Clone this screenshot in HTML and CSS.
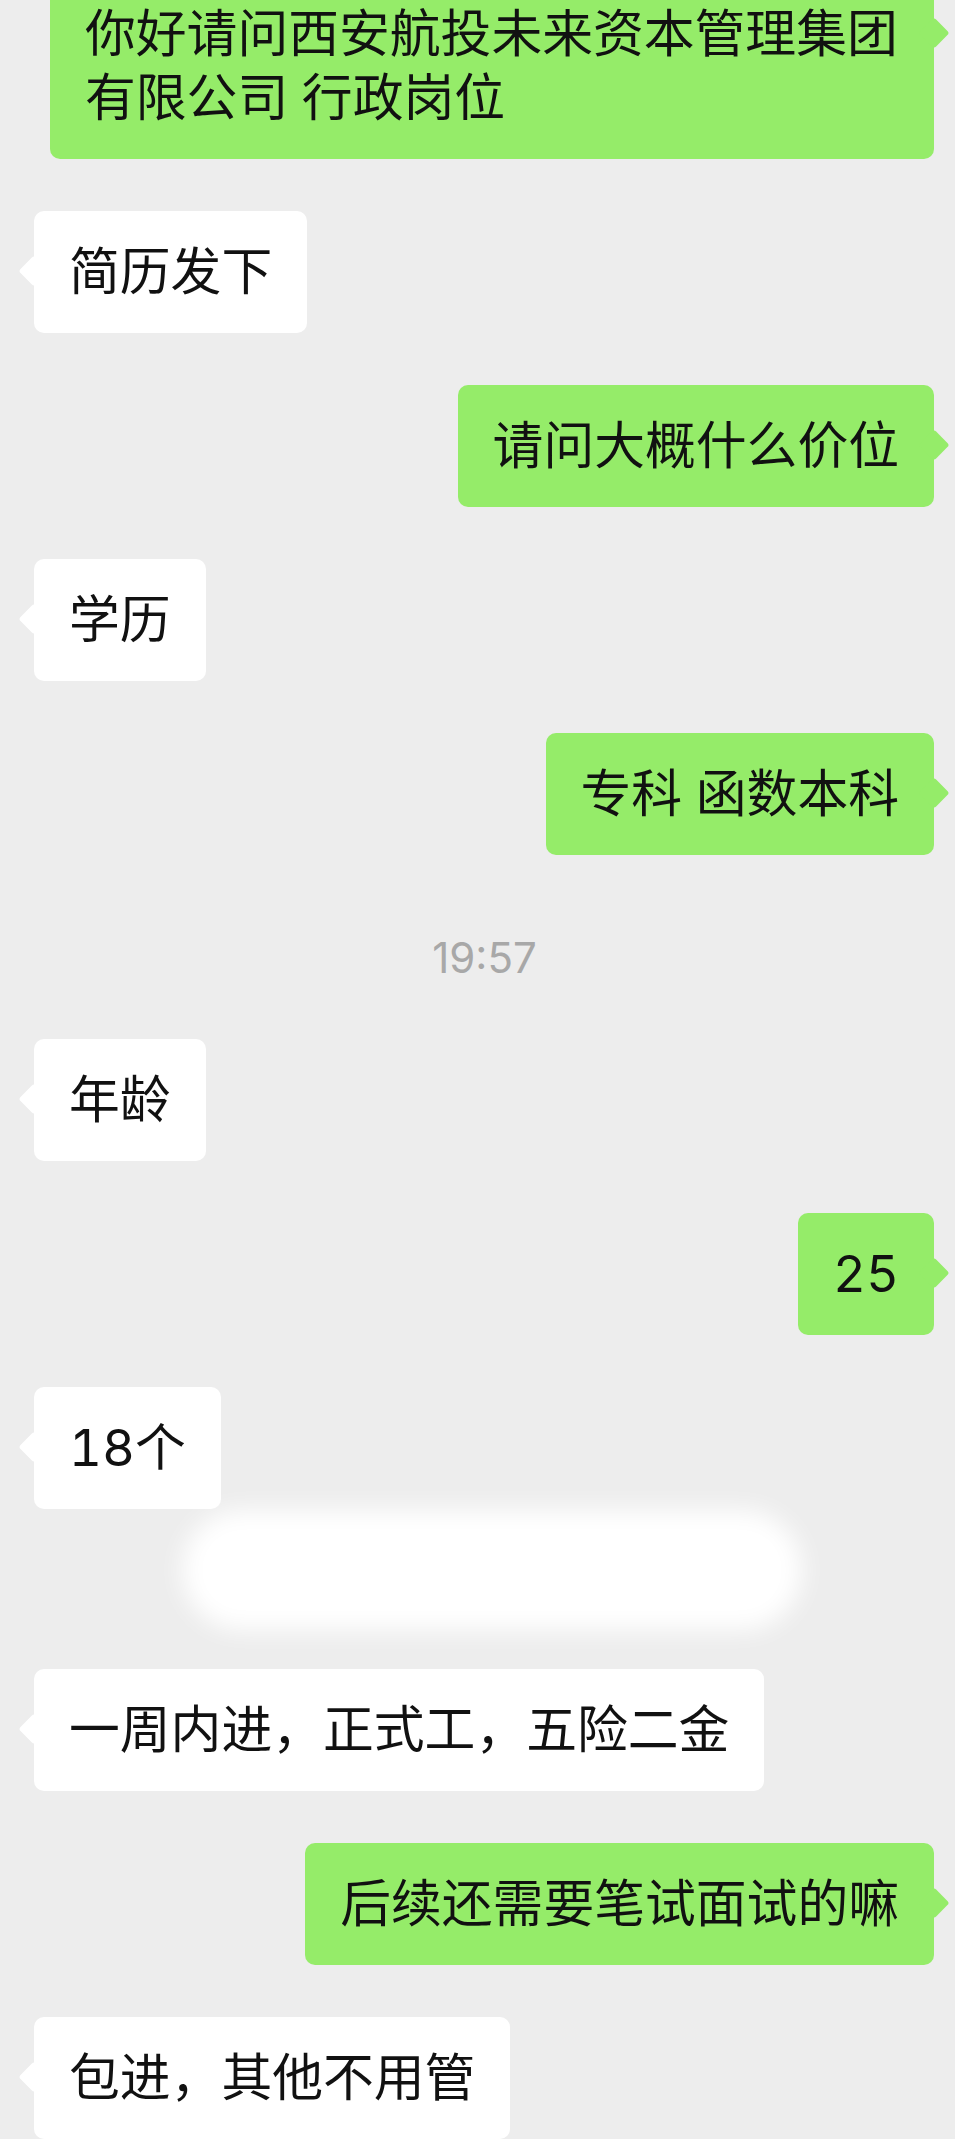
FILE: index.html
```html
<!DOCTYPE html>
<html lang="zh-CN">
<head>
<meta charset="utf-8">
<title>聊天记录</title>
<link rel="stylesheet" href="styles.css">
</head>
<body>
<div class="chat">
  <div class="row out"><div class="bubble">你好请问西安航投未来资本管理集团有限公司 行政岗位</div></div>
  <div class="row in"><div class="bubble">简历发下</div></div>
  <div class="row out"><div class="bubble">请问大概什么价位</div></div>
  <div class="row in"><div class="bubble">学历</div></div>
  <div class="row out"><div class="bubble">专科 函数本科</div></div>
  <div class="time">19:57</div>
  <div class="row in"><div class="bubble">年龄</div></div>
  <div class="row out"><div class="bubble">25</div></div>
  <div class="row in tight"><div class="bubble">18个</div></div>
  <div class="redact"></div>
  <div class="row in"><div class="bubble">一周内进，正式工，五险二金</div></div>
  <div class="row out"><div class="bubble">后续还需要笔试面试的嘛</div></div>
  <div class="row in"><div class="bubble">包进，其他不用管</div></div>
</div>
</body>
</html>
```
FILE: styles.css
```css
html, body {
  margin: 0;
  padding: 0;
}
body {
  background: #ededed;
  width: 955px;
  height: 2139px;
  overflow: hidden;
  font-family: Inter, "Noto Sans CJK SC", sans-serif;
}
.chat {
  display: flex;
  flex-direction: column;
  margin-top: -27px;
}
.row {
  display: flex;
  margin-bottom: 52px;
}
.row.in {
  justify-content: flex-start;
  padding-left: 34px;
}
.row.out {
  justify-content: flex-end;
  padding-right: 21px;
}
.row.tight {
  margin-bottom: 1px;
}
.bubble {
  position: relative;
  box-sizing: border-box;
  max-width: 884px;
  padding: 29px 35px;
  border-radius: 10px;
  font-size: 50.8px;
  line-height: 64px;
  color: #111111;
  font-variant-numeric: tabular-nums;
}
.in .bubble {
  background: #ffffff;
}
.out .bubble {
  background: #95ec69;
}
.bubble::before {
  content: "";
  position: absolute;
  top: 49px;
  width: 22px;
  height: 22px;
  border-radius: 3px;
  background: inherit;
  transform: rotate(45deg);
}
.in .bubble::before {
  left: -11px;
}
.out .bubble::before {
  right: -11px;
}
.time {
  margin: 21px 0 51px;
  padding-left: 14px;
  text-align: center;
  font-size: 42px;
  line-height: 60px;
  color: #a8a8a8;
}
.redact {
  align-self: flex-start;
  margin: 0 0 39px 182px;
  width: 620px;
  height: 120px;
  border-radius: 60px;
  background: #ffffff;
  filter: blur(12px);
}
```
